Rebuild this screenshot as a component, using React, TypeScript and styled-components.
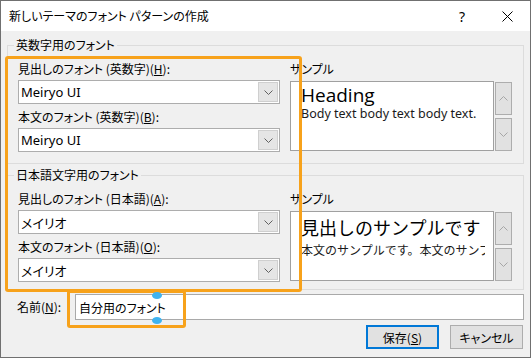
import React from "react";
import styled, { createGlobalStyle } from "styled-components";

const GlobalStyle = createGlobalStyle`
  html, body {
    margin: 0;
    padding: 0;
    background: #ffffff;
  }
  body {
    font-family: "Noto Sans CJK JP", "Noto Sans", sans-serif;
    font-size: 12px;
    color: #000000;
  }
`;

const Window = styled.div`
  position: relative;
  width: 531px;
  height: 358px;
  box-sizing: border-box;
  border: 1px solid #707070;
  background: #f0f0f0;
  display: flex;
  flex-direction: column;
  overflow: hidden;
  font-feature-settings: "palt";
`;

const TitleBar = styled.div`
  height: 30px;
  flex-shrink: 0;
  background: #ffffff;
  display: flex;
  align-items: center;
  padding-left: 8px;
`;

const Title = styled.div`
  font-size: 12px;
  line-height: 16px;
  flex: 1;
`;

const TitleButton = styled.div<{ $w: number }>`
  width: ${(p) => p.$w}px;
  height: 30px;
  display: flex;
  align-items: center;
  justify-content: center;
  font-family: "Noto Sans", sans-serif;
  font-size: 14px;
`;

const Body = styled.div`
  display: flex;
  flex-direction: column;
  padding: 14px 0 0 6px;
`;

const Group = styled.div<{ $h: number; $mt?: number }>`
  box-sizing: border-box;
  width: 517px;
  height: ${(p) => p.$h}px;
  margin-top: ${(p) => p.$mt || 0}px;
  border: 1px solid #dcdcdc;
  display: flex;
  flex-direction: column;
`;

const Legend = styled.div`
  align-self: flex-start;
  height: 16px;
  line-height: 16px;
  margin: -9px 0 0 6px;
  padding: 0 2px;
  background: #f0f0f0;
`;

const GroupContent = styled.div`
  display: flex;
  padding: 8px 0 0 10px;
`;

const LeftCol = styled.div`
  width: 262px;
  display: flex;
  flex-direction: column;
`;

const RightCol = styled.div`
  margin-left: 10px;
  display: flex;
  flex-direction: column;
`;

const Label = styled.div<{ $mt?: number }>`
  height: 16px;
  line-height: 16px;
  margin-top: ${(p) => p.$mt || 0}px;
  white-space: nowrap;
`;

const Combo = styled.div`
  box-sizing: border-box;
  height: 24px;
  margin-top: 3px;
  border: 1px solid #adadad;
  background: #ffffff;
  display: flex;
  align-items: stretch;
`;

const ComboText = styled.div`
  flex: 1;
  padding-left: 2px;
  display: flex;
  align-items: center;
  font-size: 13px;
  font-family: "Noto Sans", "Noto Sans CJK JP", sans-serif;
`;

const ComboButton = styled.div`
  width: 20px;
  margin: 1px;
  box-sizing: border-box;
  background: #e5e5e5;
  border: 1px solid #cfcfcf;
  display: flex;
  align-items: center;
  justify-content: center;
`;

const SampleRow = styled.div`
  display: flex;
  margin-top: 4px;
`;

const SampleBox = styled.div`
  box-sizing: border-box;
  width: 204px;
  height: 70px;
  border: 1px solid #a0a0a0;
  background: #ffffff;
  padding: 2px 0 0 10px;
`;

const SampleClip = styled.div`
  width: 184px;
  overflow: hidden;
  white-space: nowrap;
  font-feature-settings: normal;
`;

const SampleHeading = styled.div<{ $jp?: boolean }>`
  font-family: ${(p) =>
    p.$jp ? `"Noto Sans CJK JP", sans-serif` : `"Open Sans", "Noto Sans", sans-serif`};
  font-size: ${(p) => (p.$jp ? 18 : 19)}px;
  line-height: 22px;
  margin-top: ${(p) => (p.$jp ? 2 : 0)}px;
  font-weight: 400;
  color: #000;
`;

const SampleBody = styled.div<{ $jp?: boolean }>`
  font-family: ${(p) =>
    p.$jp ? `"Noto Sans CJK JP", sans-serif` : `"Noto Sans", sans-serif`};
  font-size: ${(p) => (p.$jp ? 12 : 12.5)}px;
  line-height: 15px;
  margin-top: ${(p) => (p.$jp ? 4 : 0)}px;
  color: #1a1a1a;
`;

const SpinCol = styled.div`
  margin-left: 1px;
  padding-top: 1px;
  display: flex;
  flex-direction: column;
  gap: 3px;
`;

const SpinButton = styled.div`
  box-sizing: border-box;
  width: 17px;
  height: 33px;
  background: #e1e1e1;
  border: 1px solid #adadad;
  display: flex;
  align-items: center;
  justify-content: center;
`;

const NameRow = styled.div`
  width: 517px;
  margin-top: 4px;
  display: flex;
  align-items: center;
`;

const NameLabel = styled.div`
  box-sizing: border-box;
  width: 68px;
  padding-left: 10px;
  line-height: 16px;
`;

const NameInput = styled.div`
  box-sizing: border-box;
  flex: 1;
  height: 26px;
  border: 1px solid #a9a9a9;
  background: #ffffff;
  padding-left: 3px;
  display: flex;
  align-items: center;
`;

const ButtonRow = styled.div`
  width: 516px;
  margin-top: 5px;
  display: flex;
  justify-content: flex-end;
  gap: 11px;
`;

const DialogButton = styled.div<{ $default?: boolean }>`
  box-sizing: border-box;
  width: 73px;
  height: 24px;
  background: #e1e1e1;
  border: ${(p) => (p.$default ? "2px solid #0078d7" : "1px solid #adadad")};
  display: flex;
  align-items: center;
  justify-content: center;
`;

const Annotation = styled.div<{ $x: number; $y: number; $w: number; $h: number }>`
  position: absolute;
  left: ${(p) => p.$x}px;
  top: ${(p) => p.$y}px;
  width: ${(p) => p.$w}px;
  height: ${(p) => p.$h}px;
  box-sizing: border-box;
  border: 3px solid #f7a21b;
  border-radius: 3px;
  pointer-events: none;
`;

const Handle = styled.div<{ $x: number; $y: number }>`
  position: absolute;
  left: ${(p) => p.$x}px;
  top: ${(p) => p.$y}px;
  width: 10px;
  height: 7px;
  border-radius: 50%;
  background: #3fb3f0;
`;

const Chevron = ({ up, color }: { up?: boolean; color: string }) => (
  <svg width="9" height="5" viewBox="0 0 9 5">
    <path
      d={up ? "M0.5 4.5 L4.5 0.5 L8.5 4.5" : "M0.5 0.5 L4.5 4.5 L8.5 0.5"}
      stroke={color}
      strokeWidth="1"
      fill="none"
    />
  </svg>
);

const CloseIcon = () => (
  <svg width="11" height="11" viewBox="0 0 11 11">
    <path d="M0.5 0.5 L10.5 10.5 M10.5 0.5 L0.5 10.5" stroke="#000" strokeWidth="1" />
  </svg>
);

interface FieldProps {
  label: React.ReactNode;
  value: string;
  mt?: number;
}

const ComboField: React.FC<FieldProps> = ({ label, value, mt }) => (
  <>
    <Label $mt={mt}>{label}</Label>
    <Combo>
      <ComboText>{value}</ComboText>
      <ComboButton>
        <Chevron color="#606060" />
      </ComboButton>
    </Combo>
  </>
);

const Sample: React.FC<{ heading: string; body: string; jp?: boolean }> = (props) => (
  <RightCol>
    <Label>サンプル</Label>
    <SampleRow>
      <SampleBox>
        <SampleClip>
          <SampleHeading $jp={props.jp}>{props.heading}</SampleHeading>
          <SampleBody $jp={props.jp}>{props.body}</SampleBody>
        </SampleClip>
      </SampleBox>
      <SpinCol>
        <SpinButton>
          <Chevron up color="#a6a6a6" />
        </SpinButton>
        <SpinButton>
          <Chevron color="#a6a6a6" />
        </SpinButton>
      </SpinCol>
    </SampleRow>
  </RightCol>
);

export default function App() {
  return (
    <>
      <GlobalStyle />
      <Window>
        <TitleBar>
          <Title>新しいテーマのフォント パターンの作成</Title>
          <TitleButton $w={46}>?</TitleButton>
          <TitleButton $w={45}>
            <CloseIcon />
          </TitleButton>
        </TitleBar>
        <Body>
          <Group $h={119}>
            <Legend>英数字用のフォント</Legend>
            <GroupContent>
              <LeftCol>
                <ComboField
                  label={<>見出しのフォント (英数字)(<u>H</u>):</>}
                  value="Meiryo UI"
                />
                <ComboField
                  label={<>本文のフォント (英数字)(<u>B</u>):</>}
                  value="Meiryo UI"
                  mt={5}
                />
              </LeftCol>
              <Sample heading="Heading" body="Body text body text body text." />
            </GroupContent>
          </Group>
          <Group $h={115} $mt={11}>
            <Legend>日本語文字用のフォント</Legend>
            <GroupContent>
              <LeftCol>
                <ComboField
                  label={<>見出しのフォント (日本語)(<u>A</u>):</>}
                  value="メイリオ"
                />
                <ComboField
                  label={<>本文のフォント (日本語)(<u>O</u>):</>}
                  value="メイリオ"
                  mt={5}
                />
              </LeftCol>
              <Sample
                jp
                heading="見出しのサンプルです"
                body="本文のサンプルです。本文のサンプルです。"
              />
            </GroupContent>
          </Group>
          <NameRow>
            <NameLabel>
              名前(<u>N</u>):
            </NameLabel>
            <NameInput>自分用のフォント</NameInput>
          </NameRow>
          <ButtonRow>
            <DialogButton $default>
              保存(<u>S</u>)
            </DialogButton>
            <DialogButton>キャンセル</DialogButton>
          </ButtonRow>
        </Body>
        <Annotation $x={4} $y={55} $w={297} $h={236} />
        <Annotation $x={66} $y={289} $w={119} $h={38} />
        <Handle $x={151} $y={291} />
        <Handle $x={151} $y={316} />
      </Window>
    </>
  );
}
